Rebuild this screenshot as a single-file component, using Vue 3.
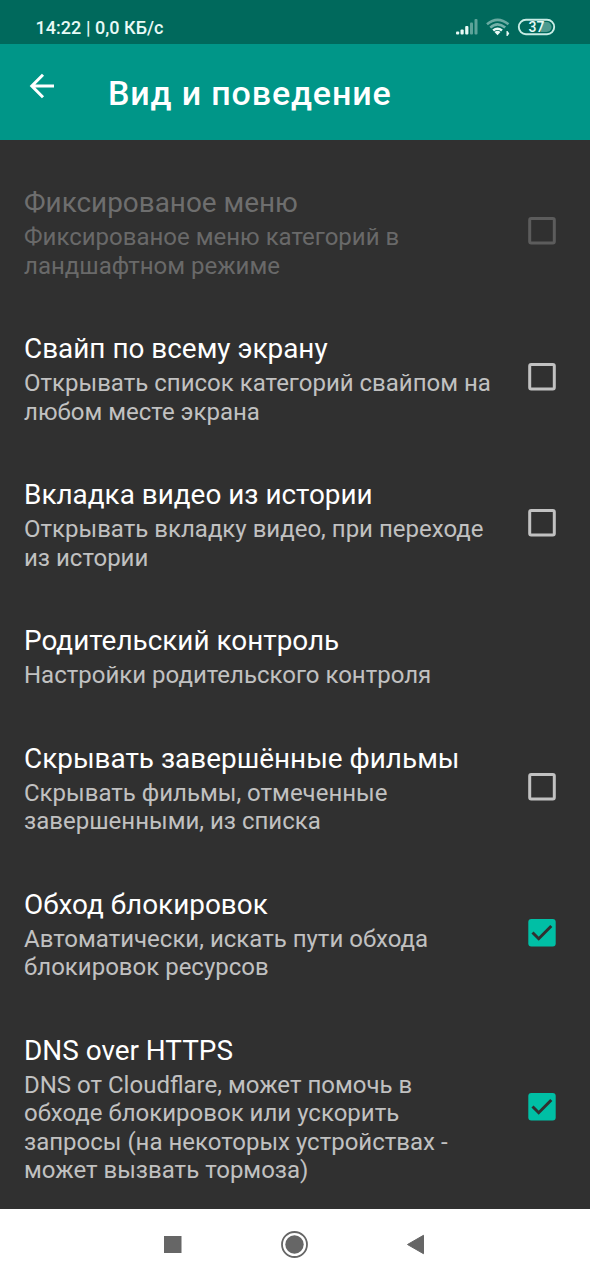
<script setup>
const items = [
  { t: 'Фиксированое меню', d: ['Фиксированое меню категорий в', 'ландшафтном режиме'], c: false, off: true },
  { t: 'Свайп по всему экрану', d: ['Открывать список категорий свайпом на', 'любом месте экрана'], c: false },
  { t: 'Вкладка видео из истории', d: ['Открывать вкладку видео, при переходе', 'из истории'], c: false },
  { t: 'Родительский контроль', d: ['Настройки родительского контроля'], c: null },
  { t: 'Скрывать завершённые фильмы', d: ['Скрывать фильмы, отмеченные', 'завершенными, из списка'], c: false },
  { t: 'Обход блокировок', d: ['Автоматически, искать пути обхода', 'блокировок ресурсов'], c: true },
  { t: 'DNS over HTTPS', d: ['DNS от Cloudflare, может помочь в', 'обходе блокировок или ускорить', 'запросы (на некоторых устройствах -', 'может вызвать тормоза)'], c: true },
]
</script>

<template>
  <div class="screen">
    <div class="status">
      <span class="clock">14:22 | 0,0 КБ/с</span>
      <svg class="sysicons" width="110" height="44" viewBox="450 0 110 44">
        <g fill="#e8faf6">
          <rect x="456" y="31.500" width="3.200" height="3" rx="1" /><rect x="460.500" y="29.500" width="3.200" height="5" rx="1" />
          <rect x="465.200" y="26" width="3.200" height="8.500" rx="1" />
          <rect x="470" y="22.500" width="3" height="12" rx="1" opacity=".4" /><rect x="474.500" y="19" width="3" height="15.500" rx="1" opacity=".4" />
        </g>
        <g fill="none" stroke="#e8faf6" stroke-width="2.600">
          <path d="M487 24.300Q497.500 15.500 508.500 24.300" opacity=".45" />
          <path d="M490.300 27.600Q497.500 21 505.200 27.600" opacity=".5" />
          <path d="M493.200 30.500Q497.500 27 502 30.500" />
        </g>
        <path d="M494.500 32Q497.500 29.500 500.500 32L497.500 35.200Z M506.500 31L507.500 31L509.300 33.500L507.500 36L506.500 36Z" fill="#e8faf6" />
        <path d="M541 22H546.500A5 5 0 0 1 546.500 32H541Z" fill="#4d9a8f" />
        <rect x="518.800" y="19.800" width="35.400" height="14.400" rx="7.200" fill="none" stroke="#c8ece5" stroke-width="1.900" />
        <text x="536.500" y="32" text-anchor="middle" class="battery">37</text>
      </svg>
    </div>
    <header class="bar">
      <svg class="back" width="26" height="26" viewBox="0 0 26 26"><path d="M25 13H3.500M14 1.800L2.800 13L14 24.200" /></svg>
      <h1>Вид и поведение</h1>
    </header>
    <main>
      <section v-for="i in items" :key="i.t" class="item" :class="{ off: i.off }">
        <div class="copy">
          <h2>{{ i.t }}</h2>
          <p><span v-for="l in i.d" :key="l">{{ l }}</span></p>
        </div>
        <svg v-if="i.c !== null" class="check" width="28" height="28" viewBox="0 0 28 28">
          <template v-if="i.c">
            <rect x=".3" width="27.400" height="27.400" rx="3" fill="#00bfa5" />
            <path d="M4.500 13.500L10.700 19.700L23.300 7" fill="none" stroke="#303030" stroke-width="3" />
          </template>
          <rect v-else x="1.700" y="1.500" width="24.600" height="24.600" rx="1.500" fill="none" stroke="#c1c1c1" stroke-width="3" />
        </svg>
      </section>
    </main>
    <nav>
      <svg width="590" height="71" viewBox="0 1209 590 71">
        <rect x="164" y="1236" width="17.500" height="17" fill="#666" />
        <circle cx="294.500" cy="1244.500" r="9.200" fill="#666" />
        <circle cx="294.500" cy="1244.500" r="12.500" fill="none" stroke="#666" stroke-width="1.800" />
        <path d="M407.500 1244.500L423.500 1235.300V1253.700Z" fill="#666" stroke="#666" stroke-linejoin="round" />
      </svg>
    </nav>
  </div>
</template>

<style scoped>
.screen { width: 590px; height: 1280px; background: #303030; font-family: Roboto, "Noto Sans", sans-serif; display: flex; flex-direction: column; overflow: hidden; }
.status { height: 44px; flex: none; background: #00695c; display: flex; justify-content: space-between; padding: 0 30px 0 35.500px; }
.clock { color: #e8faf6; font-size: 18px; font-weight: 500; line-height: 56px; letter-spacing: .04px; white-space: nowrap; }
.battery { fill: #e8faf6; font-size: 14px; font-weight: 500; }
.bar { height: 96px; flex: none; background: #009688; display: flex; align-items: center; }
.back { margin: -13px 0 0 29px; fill: none; stroke: #fff; stroke-width: 3; }
h1 { margin: 2px 0 0 53px; color: #fff; font-size: 34px; font-weight: 500; letter-spacing: .85px; white-space: nowrap; }
main { flex: 1; padding-top: 18px; min-height: 0; }
.item { display: flex; align-items: center; justify-content: space-between; padding: 28px 34px 24px 24px; }
.off h2 { color: #6e6e6e; }
.off p { color: #696969; }
.off .check { opacity: .3; }
h2 { margin: 0; color: #fff; font-size: 27.900px; font-weight: 400; line-height: 33px; white-space: nowrap; }
p { margin: 4px 0 0; color: #c1c1c1; font-size: 24px; line-height: 28.500px; }
p span { display: block; white-space: nowrap; }
.check { flex: none; margin-bottom: 4px; }
nav { height: 71px; flex: none; background: #fff; }
nav svg { display: block; }
</style>
